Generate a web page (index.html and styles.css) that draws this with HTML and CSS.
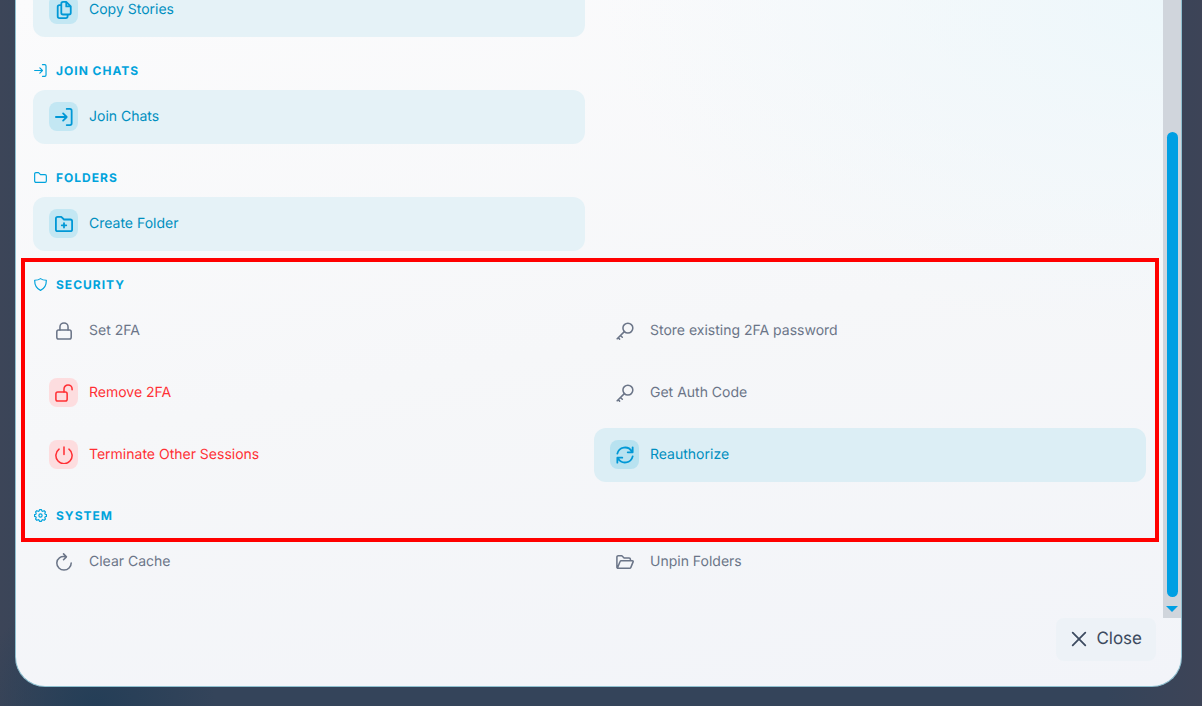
FILE: index.html
```html
<!DOCTYPE html>
<html lang="en">
<head>
    <meta charset="UTF-8">
    <meta name="viewport" content="width=device-width, initial-scale=1.0">
    <title>Actions</title>
    <link rel="stylesheet" href="styles.css">
</head>
<body>
    <!-- Shared icons -->
    <svg class="sprite" aria-hidden="true">
        <symbol id="i-enter" viewBox="0 0 20 20"><path d="M1 10h12M9 6l4 4-4 4M13 1h3.500a2 2 0 0 1 2 2v14a2 2 0 0 1-2 2h-3.500"/></symbol>
        <symbol id="i-key" viewBox="0 0 20 20"><circle cx="13.200" cy="6.800" r="5.500"/><path d="M9.300 10.700l-8 8M2.500 17.500l1.500 1.500M5 15l2 2"/></symbol>
    </svg>

    <div class="modal">
        <div class="modal-body">
            <div class="content">
                <div class="grid first">
                    <button class="item blue">
                        <span class="icon"><svg viewBox="0 0 20 20"><path d="M9 1h3.500l5 5v7a2 2 0 0 1-2 2H9a2 2 0 0 1-2-2V3a2 2 0 0 1 2-2zM12.500 1v5h5M7 4.500H5a2 2 0 0 0-2 2V17a2 2 0 0 0 2 2h7a2 2 0 0 0 2-2v-2"/></svg></span>
                        Copy Stories
                    </button>
                </div>

                <h2 class="heading"><svg><use href="#i-enter"/></svg>Join Chats</h2>
                <div class="grid">
                    <button class="item blue">
                        <span class="icon"><svg><use href="#i-enter"/></svg></span>
                        Join Chats
                    </button>
                </div>

                <h2 class="heading"><svg viewBox="0 0 20 20"><path d="M1 4.500a2 2 0 0 1 2-2h4l3 3h7a2 2 0 0 1 2 2v8a2 2 0 0 1-2 2H3a2 2 0 0 1-2-2z"/></svg>Folders</h2>
                <div class="grid">
                    <button class="item blue">
                        <span class="icon"><svg viewBox="0 0 20 20"><path d="M1 4a2 2 0 0 1 2-2h4l3 3h7a2 2 0 0 1 2 2v9a2 2 0 0 1-2 2H3a2 2 0 0 1-2-2zM10 9v5M7.500 11.500h5"/></svg></span>
                        Create Folder
                    </button>
                </div>

                <div class="marked">
                    <h2 class="heading"><svg viewBox="0 0 20 20"><path d="M10 1c2 1.500 5 2.500 9 2.500C19 10.500 17 16 10 19 3 16 1 10.500 1 3.500 5 3.500 8 2.500 10 1z"/></svg>Security</h2>
                    <div class="grid">
                        <button class="item">
                            <span class="icon"><svg viewBox="0 0 20 20"><rect x="2" y="9" width="16" height="10" rx="2"/><path d="M5.500 9V5.500a4.500 4.500 0 0 1 9 0V9"/></svg></span>
                            Set 2FA
                        </button>
                        <button class="item">
                            <span class="icon"><svg><use href="#i-key"/></svg></span>
                            Store existing 2FA password
                        </button>
                        <button class="item red">
                            <span class="icon"><svg viewBox="0 0 20 20"><rect x="1" y="9" width="12.500" height="10" rx="2"/><path d="M10 9V5.500a4.500 4.500 0 0 1 9 0V6.500"/></svg></span>
                            Remove 2FA
                        </button>
                        <button class="item">
                            <span class="icon"><svg><use href="#i-key"/></svg></span>
                            Get Auth Code
                        </button>
                        <button class="item red">
                            <span class="icon"><svg viewBox="0 0 20 20"><path d="M10 1v8.500M4.500 3.500a9 9 0 1 0 11 0"/></svg></span>
                            Terminate Other Sessions
                        </button>
                        <button class="item blue active">
                            <span class="icon"><svg viewBox="0 0 20 20"><path d="M1.500 8.500a8.700 8.700 0 0 1 16-2.500M18.500 11.500a8.700 8.700 0 0 1-16 2.500M18.500 1.500V7H13M1.500 18.500V13H7"/></svg></span>
                            Reauthorize
                        </button>
                    </div>
                    <h2 class="heading"><svg viewBox="0 0 20 20"><path d="M8.500 1h3l.7 2 1.400.6 2-1 2 2-1 2 .6 1.400 2 .7v2.600l-2 .7-.6 1.400 1 2-2 2-2-1-1.400.6-.7 2h-3l-.7-2-1.400-.6-2 1-2-2 1-2-.6-1.400-2-.7V8.700l2-.7.6-1.400-1-2 2-2 2 1L7.800 3z"/><circle cx="10" cy="10" r="2.500"/></svg>System</h2>
                </div>
                <div class="grid">
                    <button class="item">
                        <span class="icon"><svg viewBox="0 0 20 20"><path d="M12 4.300C6.500 2.700 2 6.500 2 11a8 8 0 0 0 16 0M9.500 1l3.200 3.300-3.200 3.200"/></svg></span>
                        Clear Cache
                    </button>
                    <button class="item">
                        <span class="icon"><svg viewBox="0 0 20 20"><path d="M1 16V4.500A1.500 1.500 0 0 1 2.500 3h4L9 5.500h5.500A1.500 1.500 0 0 1 16 7v1.500M1.500 17l3-7.500a1.500 1.500 0 0 1 1.400-1H18a1 1 0 0 1 1 1.400L16.500 16a1.500 1.500 0 0 1-1.400 1z"/></svg></span>
                        Unpin Folders
                    </button>
                </div>
            </div>
            <div class="scrollbar">
                <div class="thumb"></div>
                <div class="arrow"></div>
            </div>
        </div>
        <div class="modal-footer">
            <button class="close">
                <svg viewBox="0 0 20 20"><path d="M3 3l14 14M17 3L3 17"/></svg>
                Close
            </button>
        </div>
    </div>
</body>
</html>
```

FILE: styles.css
```css
* {
    box-sizing: border-box;
}
body {
    margin: 0;
    padding: 0 20px 20px 15px;
    min-height: 100vh;
    overflow: hidden;
    font-family: Inter, "Noto Sans", sans-serif;
    text-rendering: geometricPrecision;
    background: radial-gradient(circle at 8% 100%, #243e57 0, transparent 120px), linear-gradient(90deg, #3c4558, #34445a 8%, #34445a 92%, #3d4457);
}
svg {
    fill: none;
    stroke: currentColor;
    stroke-width: 2;
    stroke-linecap: round;
    stroke-linejoin: round;
    flex-shrink: 0;
}
.sprite {
    display: none;
}
.modal {
    border: 1px solid #8fc0d0;
    border-top: none;
    border-radius: 0 0 30px 30px;
    background: radial-gradient(ellipse at 100% 0, #edf7fb 0, transparent 35%), linear-gradient(170deg, #fbfbfc 0, #f6f7f9 50%, #f2f4f9 100%);
    overflow: hidden;
}
.modal-body {
    display: flex;
}
.content {
    flex: 1;
    padding: 0 17px 29px;
}
.grid {
    display: grid;
    grid-template-columns: 1fr 1fr;
    gap: 8px 9px;
}
/* scrolled partly out of view */
.grid.first {
    margin-top: -17px;
}
.heading {
    display: flex;
    align-items: center;
    gap: 9px;
    height: 20px;
    margin: 23px 0 10px;
    padding-left: 1px;
    font-size: 12px;
    font-weight: 700;
    letter-spacing: 1px;
    text-transform: uppercase;
    color: #00a3dc;
}
.heading svg {
    width: 13px;
    height: 13px;
    stroke-width: 1.8;
}
.item {
    display: flex;
    align-items: center;
    gap: 11px;
    height: 54px;
    padding: 0 16px 1px;
    border: none;
    border-radius: 12px;
    background: none;
    color: #6b7588;
    font-family: inherit;
    font-size: 14px;
    text-align: left;
    text-rendering: inherit;
    cursor: pointer;
}
.icon {
    display: flex;
    align-items: center;
    justify-content: center;
    width: 29px;
    height: 29px;
    border-radius: 8px;
}
.icon svg {
    width: 18px;
    height: 18px;
    stroke-width: 1.7;
}
.item.blue {
    background: #e5f2f7;
    color: #008fc0;
}
.item.blue .icon {
    background: #c3e7f3;
    color: #0098d6;
}
.item.blue svg {
    stroke-width: 2;
}
.item.active {
    background: #dceef5;
}
.item.active .icon {
    background: #b8e2f0;
}
.item.red {
    color: #ff3035;
}
.item.red .icon {
    background: #fddddf;
}
.marked {
    position: relative;
    margin-top: 23px;
}
.marked::after {
    content: "";
    position: absolute;
    inset: -16px -13px -17px -12px;
    border: 4px solid #ff0000;
    pointer-events: none;
}
.marked .heading:first-child {
    margin-top: 0;
}
.scrollbar {
    display: flex;
    flex-direction: column;
    align-items: center;
    width: 18px;
    padding: 132px 0 6px;
    background: #d0d5dc;
}
.thumb {
    flex: 1;
    width: 11px;
    border-radius: 6px;
    background: #009fe3;
}
.arrow {
    margin-top: 9px;
    border: 6px solid transparent;
    border-top-color: #009fe3;
    border-bottom: none;
}
.modal-footer {
    display: flex;
    justify-content: flex-end;
    padding: 0 25px 25px;
}
.close {
    display: flex;
    align-items: center;
    gap: 8px;
    height: 43px;
    padding: 0 14px 1px;
    border: none;
    border-radius: 8px;
    background: #edf2f7;
    color: #3d4b60;
    font-family: inherit;
    font-size: 17px;
    text-rendering: inherit;
    cursor: pointer;
}
.close svg {
    width: 18px;
    height: 18px;
}
```
